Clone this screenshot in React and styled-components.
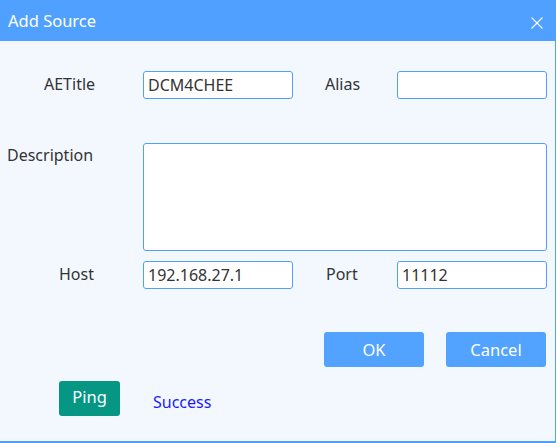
import React from "react";
import styled, { createGlobalStyle } from "styled-components";

const GlobalStyle = createGlobalStyle`
  body {
    margin: 0;
    background: #ffffff;
    font-family: "Noto Sans", "Open Sans", sans-serif;
  }
`;

function App() {
  return (
    <>
      <GlobalStyle />
      <Dialog>
        <TitleBar>
          <Title>Add Source</Title>
          <CloseButton aria-label="close">
            <svg width="12" height="12" viewBox="0 0 12 12">
              <path d="M0.5 0.5 L11.5 11.5 M11.5 0.5 L0.5 11.5" stroke="#ffffff" strokeWidth="1.1" fill="none" />
            </svg>
          </CloseButton>
        </TitleBar>
        <Body>
          <Row $top={30}>
            <Label $left={44}>AETitle</Label>
            <Input defaultValue="DCM4CHEE" />
            <Label $left={32}>Alias</Label>
            <Input defaultValue="" />
          </Row>
          <Row $top={44}>
            <Label $left={7} $top>Description</Label>
            <TextArea />
          </Row>
          <Row $top={10}>
            <Label $left={59}>Host</Label>
            <Input defaultValue="192.168.27.1" />
            <Label $left={33}>Port</Label>
            <Input defaultValue="11112" />
          </Row>
          <Actions>
            <Button>OK</Button>
            <Button>Cancel</Button>
          </Actions>
          <PingRow>
            <PingButton>Ping</PingButton>
            <Status>Success</Status>
          </PingRow>
        </Body>
      </Dialog>
    </>
  );
}

export default App;

const Dialog = styled.div`
  width: 556px;
  height: 443px;
  box-sizing: border-box;
  display: flex;
  flex-direction: column;
  background: #f3f8ff;
  border-right: 1px solid #4f9ffe;
  border-bottom: 2px solid #4f9ffe;
`;

const TitleBar = styled.div`
  height: 41px;
  flex-shrink: 0;
  display: flex;
  align-items: center;
  justify-content: space-between;
  background: #50a1ff;
  padding: 0 12px 0 8px;
`;

const Title = styled.span`
  color: #ffffff;
  font-size: 16.5px;
  line-height: 1;
  margin-top: 1px;
`;

const CloseButton = styled.span`
  display: flex;
  width: 12px;
  height: 12px;
  margin-top: 4px;
`;

const Body = styled.div`
  flex: 1;
  display: flex;
  flex-direction: column;
`;

const Row = styled.div`
  display: grid;
  grid-template-columns: 143px 150px 104px 150px;
  margin-top: ${(p) => p.$top}px;
`;

const Label = styled.span`
  padding-left: ${(p) => p.$left}px;
  align-self: ${(p) => (p.$top ? "start" : "center")};
  font-size: 16px;
  line-height: 24px;
  color: #333333;
  white-space: nowrap;
  margin-top: ${(p) => (p.$top ? "0" : "-2px")};
`;

const Input = styled.input`
  box-sizing: border-box;
  width: 150px;
  height: 28px;
  border: 1px solid #4f9ffe;
  border-radius: 3px;
  background: #ffffff;
  padding: 0 4px;
  font-family: "Noto Sans", sans-serif;
  font-size: 16px;
  color: #333333;
  outline: none;
`;

const TextArea = styled.textarea`
  grid-column: 2 / 5;
  box-sizing: border-box;
  height: 108px;
  border: 1px solid #4f9ffe;
  border-radius: 3px;
  background: #ffffff;
  resize: none;
  outline: none;
  margin: 0;
`;

const Actions = styled.div`
  display: flex;
  gap: 22px;
  margin-top: 43px;
  padding-left: 324px;
`;

const Button = styled.button`
  width: 100px;
  height: 35px;
  border: none;
  border-radius: 3px;
  background: #52a2ff;
  color: #ffffff;
  font-family: "Noto Sans", sans-serif;
  font-size: 16.5px;
  padding: 0;
`;

const PingRow = styled.div`
  display: flex;
  align-items: center;
  margin-top: 14px;
  padding-left: 59px;
`;

const PingButton = styled.button`
  width: 61px;
  height: 35px;
  border: none;
  border-radius: 3px;
  background: #059684;
  color: #ffffff;
  font-family: "Noto Sans", sans-serif;
  font-size: 16.5px;
  padding: 0 0 4px;
`;

const Status = styled.span`
  margin-left: 33px;
  margin-top: 7px;
  color: #1a1aff;
  font-size: 16px;
`;
